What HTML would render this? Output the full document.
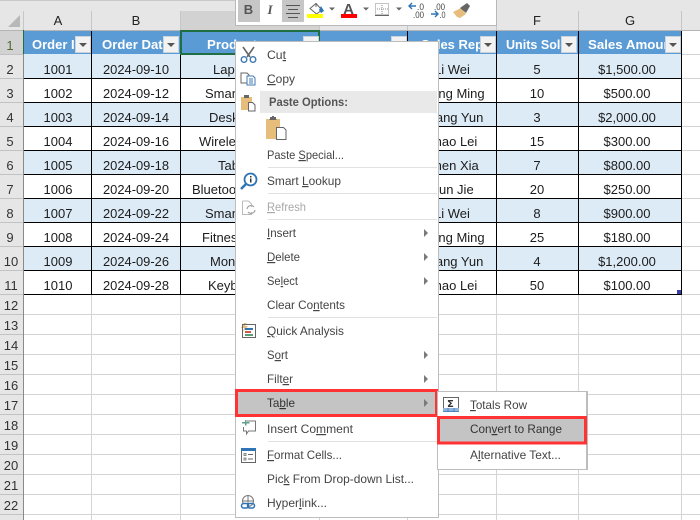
<!DOCTYPE html>
<html lang="en"><head><meta charset="utf-8"><title>Convert to Range</title>
<style>
html,body{margin:0;padding:0;background:#fff;width:700px;height:520px;overflow:hidden}
svg{display:block;font-family:"Liberation Sans",sans-serif}
.c{font-size:13px;fill:#1c1c1c;text-anchor:middle}
.h{font-size:13px;fill:#fff;font-weight:bold}
.r{font-size:13px;fill:#333;text-anchor:middle}
.m{font-size:12px;fill:#444}
.u{text-decoration:underline}
</style></head><body>
<svg width="700" height="520" viewBox="0 0 700 520" xmlns="http://www.w3.org/2000/svg">
<!-- chrome -->
<rect width="700" height="30" fill="#e6e6e6"/>
<rect x="0" y="0" width="235" height="1" fill="#c8c8c8"/>
<rect x="181" y="11" width="139" height="19" fill="#d2d2d2"/>
<rect x="0" y="30" width="23" height="490" fill="#e6e6e6"/>
<rect x="0" y="30" width="23" height="24" fill="#d2d2d2"/>
<path d="M8 27L20 15V27Z" fill="#b8b8b8"/>
<rect x="0" y="30" width="700" height="1" fill="#b5b5b5"/>
<g fill="#c6c6c6"><rect x="23" y="11" width="1" height="19"/><rect x="91" y="11" width="1" height="19"/><rect x="180" y="11" width="1" height="19"/><rect x="319" y="11" width="1" height="19"/><rect x="407" y="11" width="1" height="19"/><rect x="496" y="11" width="1" height="19"/><rect x="578" y="11" width="1" height="19"/><rect x="681" y="11" width="1" height="19"/></g>
<g class="r" style="font-size:13px;fill:#222;text-anchor:middle">
<text x="58" y="25">A</text><text x="136" y="25">B</text><text x="537" y="25">F</text><text x="630" y="25">G</text>
</g>
<!-- grid -->
<g fill="#d4d4d4">
<rect x="24" y="314" width="676" height="1"/><rect x="24" y="334" width="676" height="1"/><rect x="24" y="354" width="676" height="1"/><rect x="24" y="374" width="676" height="1"/><rect x="24" y="394" width="676" height="1"/><rect x="24" y="414" width="676" height="1"/><rect x="24" y="434" width="676" height="1"/><rect x="24" y="454" width="676" height="1"/><rect x="24" y="474" width="676" height="1"/><rect x="24" y="494" width="676" height="1"/><rect x="24" y="514" width="676" height="1"/>
<rect x="682" y="54" width="18" height="1"/><rect x="682" y="78" width="18" height="1"/><rect x="682" y="102" width="18" height="1"/><rect x="682" y="126" width="18" height="1"/><rect x="682" y="150" width="18" height="1"/><rect x="682" y="174" width="18" height="1"/><rect x="682" y="198" width="18" height="1"/><rect x="682" y="222" width="18" height="1"/><rect x="682" y="246" width="18" height="1"/><rect x="682" y="270" width="18" height="1"/><rect x="682" y="294" width="18" height="1"/>
<rect x="91" y="295" width="1" height="225"/><rect x="180" y="295" width="1" height="225"/><rect x="319" y="295" width="1" height="225"/><rect x="407" y="295" width="1" height="225"/><rect x="496" y="295" width="1" height="225"/><rect x="578" y="295" width="1" height="225"/><rect x="681" y="295" width="1" height="225"/>
</g>
<!-- row header lines -->
<g fill="#c2c2c2">
<rect x="0" y="54" width="23" height="1"/><rect x="0" y="78" width="23" height="1"/><rect x="0" y="102" width="23" height="1"/><rect x="0" y="126" width="23" height="1"/><rect x="0" y="150" width="23" height="1"/><rect x="0" y="174" width="23" height="1"/><rect x="0" y="198" width="23" height="1"/><rect x="0" y="222" width="23" height="1"/><rect x="0" y="246" width="23" height="1"/><rect x="0" y="270" width="23" height="1"/><rect x="0" y="294" width="23" height="1"/><rect x="0" y="314" width="23" height="1"/><rect x="0" y="334" width="23" height="1"/><rect x="0" y="354" width="23" height="1"/><rect x="0" y="374" width="23" height="1"/><rect x="0" y="394" width="23" height="1"/><rect x="0" y="414" width="23" height="1"/><rect x="0" y="434" width="23" height="1"/><rect x="0" y="454" width="23" height="1"/><rect x="0" y="474" width="23" height="1"/><rect x="0" y="494" width="23" height="1"/><rect x="0" y="514" width="23" height="1"/>
</g>
<rect x="23" y="54" width="1" height="466" fill="#8a8a8a"/>
<g class="r" style="font-size:13px;fill:#333;text-anchor:middle">
<text x="10" y="50" style="fill:#4d6a2c">1</text><text x="10" y="74">2</text><text x="10" y="98">3</text><text x="10" y="122">4</text><text x="10" y="146">5</text><text x="10" y="170">6</text><text x="10" y="194">7</text><text x="10" y="218">8</text><text x="10" y="242">9</text><text x="11" y="266">10</text><text x="11" y="290">11</text><text x="11" y="310">12</text><text x="11" y="330">13</text><text x="11" y="350">14</text><text x="11" y="370">15</text><text x="11" y="390">16</text><text x="11" y="410">17</text><text x="11" y="430">18</text><text x="11" y="450">19</text><text x="11" y="470">20</text><text x="11" y="490">21</text><text x="11" y="510">22</text>
</g>
<!-- table -->
<rect x="24" y="31" width="658" height="23" fill="#5b9bd5"/>
<g fill="#ddebf7"><rect x="24" y="54" width="658" height="24"/><rect x="24" y="102" width="658" height="24"/><rect x="24" y="150" width="658" height="24"/><rect x="24" y="198" width="658" height="24"/><rect x="24" y="246" width="658" height="24"/></g>
<g fill="#000"><rect x="24" y="78" width="658" height="1"/><rect x="24" y="102" width="658" height="1"/><rect x="24" y="126" width="658" height="1"/><rect x="24" y="150" width="658" height="1"/><rect x="24" y="174" width="658" height="1"/><rect x="24" y="198" width="658" height="1"/><rect x="24" y="222" width="658" height="1"/><rect x="24" y="246" width="658" height="1"/><rect x="24" y="270" width="658" height="1"/><rect x="24" y="294" width="658" height="1"/>
<rect x="91" y="31" width="1" height="264"/><rect x="180" y="31" width="1" height="264"/><rect x="407" y="31" width="1" height="264"/><rect x="496" y="31" width="1" height="264"/><rect x="578" y="31" width="1" height="264"/><rect x="681" y="31" width="1" height="264"/></g>
<!-- selected cell -->
<rect x="181" y="31" width="138" height="23" fill="none" stroke="#1f6f43" stroke-width="2"/>
<rect x="23" y="30" width="1" height="24" fill="#1f6f43"/>
<rect x="317" y="52" width="4" height="4" fill="#1f6f43"/>
<rect x="677" y="290" width="4" height="4" fill="#3a3fb0"/>
<!-- header text -->
<g class="h"><text x="32" y="49" textLength="52" lengthAdjust="spacingAndGlyphs">Order ID</text><text x="102" y="49" textLength="68" lengthAdjust="spacingAndGlyphs">Order Date</text><text x="207" y="49" textLength="50" lengthAdjust="spacingAndGlyphs">Product</text><text x="421" y="49" textLength="62" lengthAdjust="spacingAndGlyphs">Sales Rep</text><text x="506" y="49" textLength="62" lengthAdjust="spacingAndGlyphs">Units Sold</text><text x="588" y="49" textLength="88" lengthAdjust="spacingAndGlyphs">Sales Amount</text></g>
<!-- filter buttons -->
<g fill="#f2f2f2" stroke="#c9d3dc"><rect x="75.5" y="36.5" width="15" height="16"/><rect x="163.5" y="36.5" width="15" height="16"/><rect x="303.5" y="36.5" width="15" height="16"/><rect x="391.5" y="36.5" width="15" height="16"/><rect x="480.5" y="36.5" width="15" height="16"/><rect x="561.5" y="36.5" width="15" height="16"/><rect x="665.5" y="36.5" width="15" height="16"/></g>
<g fill="#555"><path d="M79 43h8l-4 4z"/><path d="M167 43h8l-4 4z"/><path d="M484 43h8l-4 4z"/><path d="M565 43h8l-4 4z"/><path d="M669 43h8l-4 4z"/></g>
<!-- data -->
<g class="c">
<text x="58" y="74">1001</text><text x="58" y="98">1002</text><text x="58" y="122">1003</text><text x="58" y="146">1004</text><text x="58" y="170">1005</text><text x="58" y="194">1006</text><text x="58" y="218">1007</text><text x="58" y="242">1008</text><text x="58" y="266">1009</text><text x="58" y="290">1010</text>
<text x="136" y="74" textLength="66" lengthAdjust="spacingAndGlyphs">2024-09-10</text><text x="136" y="98" textLength="66" lengthAdjust="spacingAndGlyphs">2024-09-12</text><text x="136" y="122" textLength="66" lengthAdjust="spacingAndGlyphs">2024-09-14</text><text x="136" y="146" textLength="66" lengthAdjust="spacingAndGlyphs">2024-09-16</text><text x="136" y="170" textLength="66" lengthAdjust="spacingAndGlyphs">2024-09-18</text><text x="136" y="194" textLength="66" lengthAdjust="spacingAndGlyphs">2024-09-20</text><text x="136" y="218" textLength="66" lengthAdjust="spacingAndGlyphs">2024-09-22</text><text x="136" y="242" textLength="66" lengthAdjust="spacingAndGlyphs">2024-09-24</text><text x="136" y="266" textLength="66" lengthAdjust="spacingAndGlyphs">2024-09-26</text><text x="136" y="290" textLength="66" lengthAdjust="spacingAndGlyphs">2024-09-28</text>
<text x="537" y="74">5</text><text x="537" y="98">10</text><text x="537" y="122">3</text><text x="537" y="146">15</text><text x="537" y="170">7</text><text x="537" y="194">20</text><text x="537" y="218">8</text><text x="537" y="242">25</text><text x="537" y="266">4</text><text x="537" y="290">50</text>
<text x="627" y="74">$1,500.00</text><text x="627" y="98">$500.00</text><text x="627" y="122">$2,000.00</text><text x="627" y="146">$300.00</text><text x="627" y="170">$800.00</text><text x="627" y="194">$250.00</text><text x="627" y="218">$900.00</text><text x="627" y="242">$180.00</text><text x="627" y="266">$1,200.00</text><text x="627" y="290">$100.00</text>
<text x="452" y="74">Li Wei</text><text x="452" y="98">Wang Ming</text><text x="452" y="122">Zhang Yun</text><text x="452" y="146">Zhao Lei</text><text x="452" y="170">Chen Xia</text><text x="452" y="194">Sun Jie</text><text x="452" y="218">Li Wei</text><text x="452" y="242">Wang Ming</text><text x="452" y="266">Zhang Yun</text><text x="452" y="290">Zhao Lei</text>
</g>
<g class="c" style="text-anchor:start">
<text x="213" y="74">Laptop</text><text x="205" y="98">Smartphone</text><text x="209" y="122">Desk</text><text x="199" y="146">Wireless</text><text x="218" y="170">Tablet</text><text x="192" y="194">Bluetooth</text><text x="205" y="218">Smartwatch</text><text x="202" y="242">Fitness</text><text x="210" y="266">Monitor</text><text x="208" y="290">Keyboard</text>
</g>
<!-- mini toolbar -->
<rect x="235" y="0" width="262" height="26" fill="#b8b8b8"/>
<rect x="236" y="0" width="260" height="25" fill="#fff"/>
<rect x="238" y="0" width="22" height="22" fill="#c6c6c6"/>
<rect x="282" y="0" width="22" height="22" fill="#c6c6c6"/>
<text x="248.500" y="14" text-anchor="middle" style="font-size:13px;font-weight:bold;fill:#555">B</text>
<text x="270" y="14" text-anchor="middle" style="font-size:13px;font-style:italic;font-family:'Liberation Serif',serif;font-weight:bold;fill:#555">I</text>
<path d="M286 5.500h14M288 9.500h10M286 13.500h14M288 17.500h10" stroke="#555" fill="none"/>
<path d="M310 8.500l6-5 6 6.500-5.500 4z" fill="#fff" stroke="#666"/><path d="M316 3v4" stroke="#666" fill="none"/><path d="M321 6l3 5-3 2-2-3z" fill="#2e75b6"/>
<rect x="307" y="14" width="16" height="4" fill="#ffff00"/>
<path d="M329 7.500h6l-3 3z" fill="#666"/>
<text x="348.500" y="14" text-anchor="middle" style="font-size:15px;font-weight:bold;fill:#555">A</text>
<rect x="341" y="14" width="16" height="4" fill="#ff0000"/>
<path d="M363 7.500h6l-3 3z" fill="#666"/>
<path d="M375.500 3.500h13v11h-13z" fill="none" stroke="#888" stroke-dasharray="1 1"/>
<path d="M382 3v11M375 9h14" stroke="#888" stroke-dasharray="1 1" fill="none"/>
<path d="M375 15.500h14" stroke="#666" fill="none"/>
<path d="M396 7.500h6l-3 3z" fill="#666"/>
<path d="M416 6h-7m3-3l-3 3 3 3" stroke="#2e75b6" stroke-width="1.400" fill="none"/>
<text x="417" y="10" textLength="7" lengthAdjust="spacingAndGlyphs" style="font-size:9px;fill:#444">.0</text><text x="413" y="18" textLength="11" lengthAdjust="spacingAndGlyphs" style="font-size:9px;fill:#444">.00</text>
<text x="434" y="10" textLength="11" lengthAdjust="spacingAndGlyphs" style="font-size:9px;fill:#444">.00</text><text x="439.500" y="18" textLength="6" lengthAdjust="spacingAndGlyphs" style="font-size:9px;fill:#444">.0</text>
<path d="M431 14h7m-3-3l3 3-3 3" stroke="#2e75b6" stroke-width="1.400" fill="none"/>
<path d="M453 12l8-4 5 6-6 4-3-1z" fill="#e7bd7b"/><path d="M460 8l7-5 3 3-4 7z" fill="#666"/>
<!-- context menu -->
<rect x="235" y="41" width="204" height="477" fill="#bdbdbd"/>
<rect x="236" y="42" width="202" height="475" fill="#fff"/>
<rect x="260" y="91" width="177" height="22" fill="#e9e9e9"/>
<g fill="#e1e1e1"><rect x="268" y="167" width="169" height="1"/><rect x="268" y="193" width="169" height="1"/><rect x="268" y="219" width="169" height="1"/><rect x="268" y="317" width="169" height="1"/><rect x="268" y="441" width="169" height="1"/></g>
<rect x="236" y="391" width="200" height="25" fill="#c4c4c4"/>
<rect x="236.500" y="390.500" width="200" height="25" fill="none" stroke="#ff3333" stroke-width="3"/>
<g class="m">
<text x="267" y="59" textLength="19" lengthAdjust="spacingAndGlyphs">Cu<tspan class="u">t</tspan></text>
<text x="267" y="83" textLength="28" lengthAdjust="spacingAndGlyphs"><tspan class="u">C</tspan>opy</text>
<text x="269" y="106" textLength="79" lengthAdjust="spacingAndGlyphs" style="font-weight:bold;fill:#555">Paste Options:</text>
<text x="267" y="159" textLength="77" lengthAdjust="spacingAndGlyphs">Paste <tspan class="u">S</tspan>pecial...</text>
<text x="267" y="185" textLength="74" lengthAdjust="spacingAndGlyphs">Smart <tspan class="u">L</tspan>ookup</text>
<text x="267" y="211" textLength="39" lengthAdjust="spacingAndGlyphs" style="fill:#a8a8a8"><tspan class="u">R</tspan>efresh</text>
<text x="267" y="237" textLength="29" lengthAdjust="spacingAndGlyphs"><tspan class="u">I</tspan>nsert</text>
<text x="267" y="261" textLength="33" lengthAdjust="spacingAndGlyphs"><tspan class="u">D</tspan>elete</text>
<text x="267" y="285" textLength="31" lengthAdjust="spacingAndGlyphs">Se<tspan class="u">l</tspan>ect</text>
<text x="267" y="309" textLength="78" lengthAdjust="spacingAndGlyphs">Clear Co<tspan class="u">n</tspan>tents</text>
<text x="267" y="335" textLength="77" lengthAdjust="spacingAndGlyphs"><tspan class="u">Q</tspan>uick Analysis</text>
<text x="267" y="359" textLength="21" lengthAdjust="spacingAndGlyphs">S<tspan class="u">o</tspan>rt</text>
<text x="267" y="383" textLength="26" lengthAdjust="spacingAndGlyphs">Filt<tspan class="u">e</tspan>r</text>
<text x="267" y="407" textLength="28" lengthAdjust="spacingAndGlyphs" style="fill:#333">Ta<tspan class="u">b</tspan>le</text>
<text x="267" y="433" textLength="86" lengthAdjust="spacingAndGlyphs">Insert Co<tspan class="u">m</tspan>ment</text>
<text x="267" y="459" textLength="75" lengthAdjust="spacingAndGlyphs"><tspan class="u">F</tspan>ormat Cells...</text>
<text x="267" y="483" textLength="147" lengthAdjust="spacingAndGlyphs">Pic<tspan class="u">k</tspan> From Drop-down List...</text>
<text x="267" y="507" textLength="60" lengthAdjust="spacingAndGlyphs">Hyper<tspan class="u">l</tspan>ink...</text>
</g>
<g fill="#7a7a7a"><path d="M424 229v8l4-4z"/><path d="M424 253v8l4-4z"/><path d="M424 277v8l4-4z"/><path d="M424 351v8l4-4z"/><path d="M424 375v8l4-4z"/><path d="M424 399v8l4-4z"/></g>
<!-- menu icons -->
<path d="M243 47l7 10M254 47l-7 10" stroke="#666" stroke-width="1.600" fill="none"/>
<circle cx="244" cy="59.500" r="2.800" fill="none" stroke="#3f79b5" stroke-width="1.400"/><circle cx="253" cy="59.500" r="2.800" fill="none" stroke="#3f79b5" stroke-width="1.400"/>
<path d="M241 73h6l2 2v8h-8z" fill="#fff" stroke="#666"/><path d="M247 76h6l2 2v7h-8z" fill="#fff" stroke="#3f79b5"/><path d="M249 79h4M249 81h4M249 83h4" stroke="#3f79b5"/>
<rect x="241" y="97" width="11" height="13" fill="#e7bd7b"/><rect x="244" y="95" width="5" height="3" fill="#666"/><path d="M248.500 102.500h4l2.500 2.500v6h-6.500z" fill="#fff" stroke="#666"/>
<rect x="266" y="119" width="14" height="20" fill="#e7bd7b"/><path d="M270 119v-2h2v-1h2v1h2v2l1 1h-8z" fill="#666"/><path d="M276.500 127.500h7l2.500 2.500v9.500h-9.500z" fill="#fff" stroke="#666"/>
<circle cx="250.500" cy="179.500" r="6" fill="#fff" stroke="#2f75b5" stroke-width="1.800"/><path d="M246 184l-5 5" stroke="#2f75b5" stroke-width="2.500"/><rect x="250" y="176" width="1.500" height="1.500" fill="#333"/><rect x="250" y="178.500" width="1.500" height="4" fill="#333"/>
<path d="M242.500 201h6l3 3v3M251.500 212v2.500h-9v-13.500" fill="none" stroke="#bbb"/><path d="M247 209a4 4 0 0 1 7-2M255 210a4 4 0 0 1-7 2" fill="none" stroke="#aaa" stroke-width="1.300"/>
<path d="M244 323l-3 5h3l-1 4 5-6h-3l2-3z" fill="#e7bd7b"/><rect x="242.500" y="324.500" width="13" height="13" fill="none" stroke="#666"/><rect x="245" y="328" width="8" height="2" fill="#2f75b5"/><rect x="245" y="331" width="6" height="2" fill="#d05a4a"/><rect x="245" y="334" width="8" height="2" fill="#5b9f7a"/>
<path d="M242 422h3v-2h1.500v2h3v1.500h-3v2h-1.500v-2h-3z" fill="#5f9f8c"/><path d="M247 421h8.500v10h-7l-2 3v-3h-3v-4" fill="none" stroke="#777"/>
<rect x="241.500" y="448.500" width="14" height="14" fill="#fff" stroke="#666"/><rect x="241" y="448" width="15" height="3" fill="#2f75b5"/><path d="M244 453.500h2v2h-2zM244 458h2v2h-2z" fill="none" stroke="#666" stroke-width=".8"/><path d="M248 454.500h5M248 459h5" stroke="#666"/>
<circle cx="248" cy="501" r="5.500" fill="none" stroke="#777"/><path d="M243 501h10M248 495.500v11" stroke="#777"/><rect x="241.500" y="503.500" width="7" height="4.500" rx="2.200" fill="#fff" stroke="#2f75b5" stroke-width="1.500"/><rect x="247.500" y="503.500" width="7" height="4.500" rx="2.200" fill="none" stroke="#2f75b5" stroke-width="1.500"/>
<!-- submenu -->
<rect x="437" y="391" width="151" height="79" fill="#bdbdbd"/>
<rect x="438" y="392" width="148" height="77" fill="#fff"/>
<rect x="438" y="417" width="148" height="26" fill="#c4c4c4"/>
<rect x="438.500" y="417.500" width="147" height="25.500" fill="none" stroke="#ff3333" stroke-width="3"/>
<rect x="443.500" y="397.500" width="15" height="11" fill="#fff" stroke="#666"/><rect x="443" y="408" width="16" height="4" fill="#8fb4dc"/><path d="M443 411.500h16M448 408v4M454 408v4" stroke="#3f79b5" stroke-width=".8"/>
<text x="447" y="407" style="font-size:10px;font-weight:bold;fill:#333;font-family:'DejaVu Sans',sans-serif">Σ</text>
<g class="m">
<text x="470" y="409" textLength="57" lengthAdjust="spacingAndGlyphs"><tspan class="u">T</tspan>otals Row</text>
<text x="470" y="433" textLength="92" lengthAdjust="spacingAndGlyphs" style="fill:#333">Con<tspan class="u">v</tspan>ert to Range</text>
<text x="470" y="459" textLength="91" lengthAdjust="spacingAndGlyphs">A<tspan class="u">l</tspan>ternative Text...</text>
</g>
</svg>
</body></html>
